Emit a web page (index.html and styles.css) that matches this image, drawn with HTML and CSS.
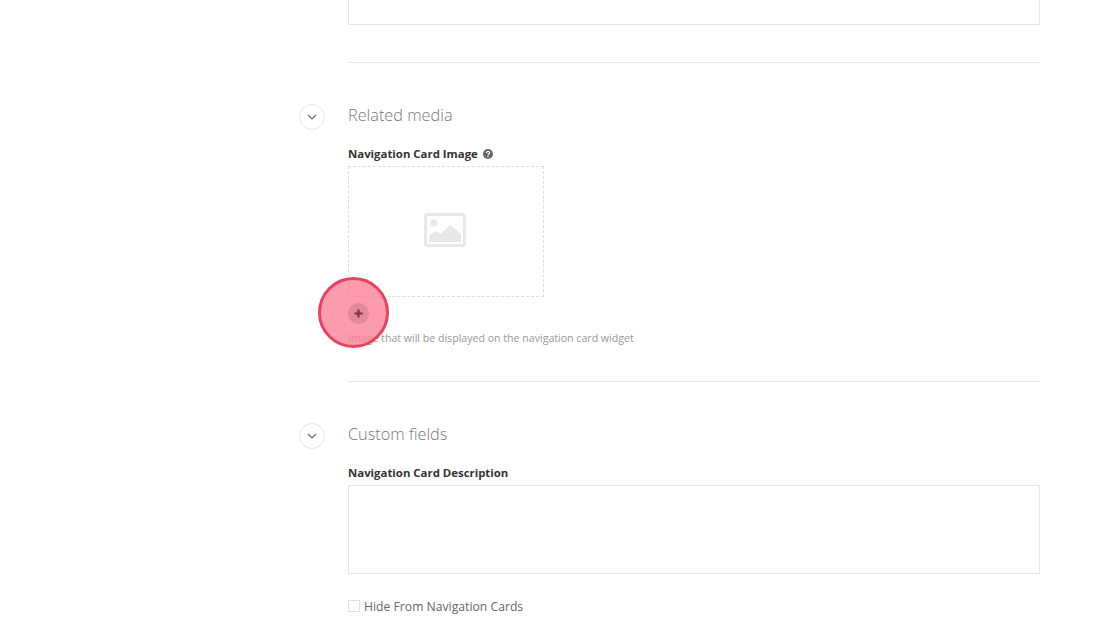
FILE: index.html
```html
<!DOCTYPE html>
<html lang="en">
<head>
  <meta charset="UTF-8">
  <title>Edit page</title>
  <link rel="stylesheet" href="styles.css">
</head>
<body>
  <div class="page">
    <div class="top-input"></div>
    <div class="divider first"></div>

    <section class="panel media">
      <button class="toggle">
        <svg width="10" height="6" viewBox="0 0 10 6"><path d="M1 1l4 4 4-4" fill="none" stroke="#666" stroke-width="1.2"/></svg>
      </button>
      <div class="panel-body">
        <h2>Related media</h2>
        <div class="field-label">
          Navigation Card Image
          <svg class="help" width="10" height="10" viewBox="0 0 10 10">
            <circle cx="5" cy="5" r="5" fill="#666"/>
            <path d="M3.4 3.9c0-2.1 3.3-2.1 3.3-.1 0 1.2-1.7 1.1-1.7 2.4" fill="none" stroke="#fff" stroke-width="1.2"/>
            <rect x="4.4" y="7" width="1.2" height="1.2" fill="#fff"/>
          </svg>
        </div>
        <div class="dropzone">
          <svg width="42" height="34" viewBox="0 0 42 34">
            <rect x="1.5" y="1.5" width="39" height="31" rx="2" fill="none" stroke="#e8e8e8" stroke-width="3"/>
            <circle cx="10" cy="10" r="3.5" fill="#e8e8e8"/>
            <path d="M5 29v-6l7-5 5 3 9-9 11 9v8z" fill="#e8e8e8"/>
          </svg>
        </div>
        <p class="hint">Image that will be displayed on the navigation card widget</p>
      </div>
    </section>

    <div class="divider second"></div>

    <section class="panel custom">
      <button class="toggle">
        <svg width="10" height="6" viewBox="0 0 10 6"><path d="M1 1l4 4 4-4" fill="none" stroke="#666" stroke-width="1.2"/></svg>
      </button>
      <div class="panel-body">
        <h2>Custom fields</h2>
        <div class="field-label">Navigation Card Description</div>
        <div class="textarea"></div>
        <label class="check">
          <span class="box"></span>
          Hide From Navigation Cards
        </label>
      </div>
    </section>

    <!-- click marker from the walkthrough -->
    <div class="marker">
      <div class="add-btn">
        <svg width="9" height="9" viewBox="0 0 10 10"><path d="M5 .5v9M.5 5h9" stroke="#84304a" stroke-width="2.4"/></svg>
      </div>
    </div>
  </div>
</body>
</html>
```

FILE: styles.css
```css
* {
  margin: 0;
  padding: 0;
  box-sizing: border-box;
}
html,
body {
  height: 100%;
  overflow: hidden;
  background-color: #fff;
}
body {
  font-family: "Open Sans", "Liberation Sans", sans-serif;
  color: #333;
}
.page {
  position: relative;
  height: 627px;
  padding-left: 299px;
}
.top-input {
  width: 692px;
  height: 25px;
  margin-left: 49px;
  border: 1px solid #e6e6e6;
  border-top: 0;
}
.divider {
  width: 692px;
  height: 1px;
  margin-left: 49px;
  background-color: #e6e6e6;
}
.divider.first {
  margin-top: 37px;
}
.divider.second {
  margin-top: 35px;
}
.panel {
  display: flex;
  gap: 23px;
}
.panel.media {
  margin-top: 41px;
}
.panel.custom {
  margin-top: 41px;
}
.toggle {
  display: flex;
  align-items: center;
  justify-content: center;
  flex: none;
  width: 26px;
  height: 26px;
  border: 1px solid #e6e6e6;
  border-radius: 50%;
  background-color: #fff;
}
.panel-body {
  width: 692px;
}
h2 {
  height: 22px;
  font-size: 16.3px;
  font-weight: 300;
  line-height: 22px;
  color: #777;
}
.field-label {
  display: flex;
  align-items: center;
  gap: 5px;
  height: 16px;
  margin-top: 20px;
  font-size: 11.4px;
  font-weight: 700;
  line-height: 16px;
  color: #333;
}
.dropzone {
  display: flex;
  align-items: center;
  justify-content: center;
  width: 196px;
  height: 131px;
  margin-top: 4px;
  padding: 0 2px 3px 0;
  border: 1px dashed #ddd;
}
.hint {
  margin-top: 33px;
  font-size: 10.6px;
  line-height: 16px;
  color: #999;
}
.textarea {
  height: 89px;
  margin-top: 4px;
  border: 1px solid #e6e6e6;
}
.check {
  display: flex;
  align-items: center;
  gap: 4px;
  height: 18px;
  margin-top: 23px;
  font-size: 12.2px;
  color: #666;
}
.box {
  width: 12px;
  height: 12px;
  border: 1px solid #e0e0e0;
}
.marker {
  position: absolute;
  left: 318px;
  top: 277px;
  display: flex;
  align-items: center;
  justify-content: center;
  width: 71px;
  height: 71px;
  border: 3px solid #e8425f;
  border-radius: 50%;
  background-color: rgba(250, 130, 150, .8);
}
.add-btn {
  display: flex;
  align-items: center;
  justify-content: center;
  width: 21px;
  height: 21px;
  margin: 2px 0 0 9px;
  border-radius: 50%;
  background-color: #e28a9c;
}
```
